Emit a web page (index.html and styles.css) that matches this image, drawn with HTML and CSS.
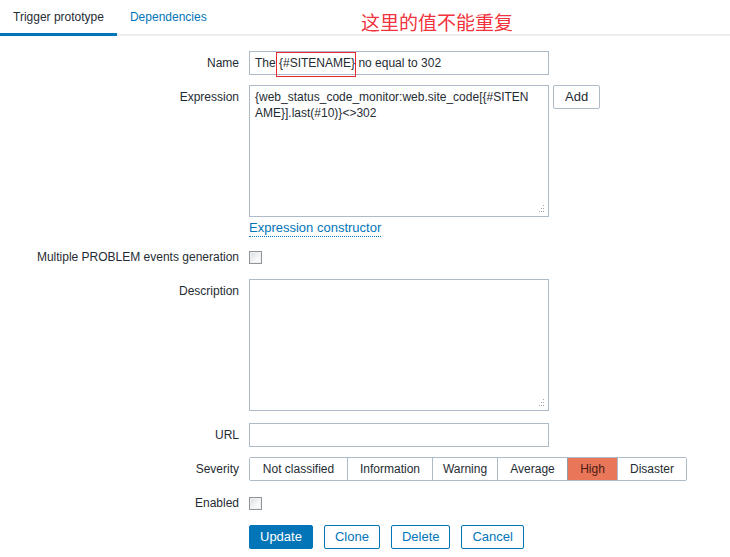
FILE: index.html
```html
<!DOCTYPE html>
<html>
<head>
<meta charset="utf-8">
<link rel="stylesheet" href="styles.css">
</head>
<body>
<div class="tabs">
  <div class="tab active">Trigger prototype</div>
  <div class="tab">Dependencies</div>
</div>
<div class="note">这里的值不能重复</div>
<div class="form">
  <div class="row">
    <div class="label">Name</div>
    <div class="field input">The <span class="hl">{#SITENAME}</span> no equal to 302</div>
  </div>
  <div class="row">
    <div class="label">Expression</div>
    <div class="col">
      <div class="expr-line">
        <div class="field area">{web_status_code_monitor:web.site_code[{#SITEN<br>AME}].last(#10)}&lt;&gt;302<svg class="grip" width="8" height="8" viewBox="0 0 8 8"><rect x="6" y="0" width="1" height="1"/><rect x="4" y="3" width="1" height="1"/><rect x="6" y="3" width="1" height="1"/><rect x="2" y="6" width="1" height="1"/><rect x="4" y="6" width="1" height="1"/><rect x="6" y="6" width="1" height="1"/></svg></div>
        <div class="btn-gray">Add</div>
      </div>
      <div class="link-line"><span class="link">Expression constructor</span></div>
    </div>
  </div>
  <div class="row row-check row-multi">
    <div class="label">Multiple PROBLEM events generation</div>
    <span class="checkbox"></span>
  </div>
  <div class="row row-desc">
    <div class="label">Description</div>
    <div class="field area"><svg class="grip" width="8" height="8" viewBox="0 0 8 8"><rect x="6" y="0" width="1" height="1"/><rect x="4" y="3" width="1" height="1"/><rect x="6" y="3" width="1" height="1"/><rect x="2" y="6" width="1" height="1"/><rect x="4" y="6" width="1" height="1"/><rect x="6" y="6" width="1" height="1"/></svg></div>
  </div>
  <div class="row row-url">
    <div class="label">URL</div>
    <div class="field input"></div>
  </div>
  <div class="row">
    <div class="label">Severity</div>
    <div class="seg">
      <span class="s1">Not classified</span><span class="s2">Information</span><span class="s3">Warning</span><span class="s4">Average</span><span class="s5 sel">High</span><span class="s6">Disaster</span>
    </div>
  </div>
  <div class="row row-check">
    <div class="label">Enabled</div>
    <span class="checkbox"></span>
  </div>
  <div class="row row-btns">
    <div class="label"></div>
    <div class="btns">
      <span class="btn primary">Update</span>
      <span class="btn">Clone</span>
      <span class="btn">Delete</span>
      <span class="btn">Cancel</span>
    </div>
  </div>
</div>
</body>
</html>
```

FILE: styles.css
```css
* { box-sizing: border-box; }
body {
  margin: 0;
  font-family: "Liberation Sans", Arial, sans-serif;
  font-size: 12px;
  color: #1f2c33;
  background: #fff;
  position: relative;
  width: 730px;
  height: 557px;
  overflow: hidden;
}
.tabs {
  display: flex;
  height: 36px;
  border-bottom: 2px solid #ebeef0;
}
.tab {
  padding: 10px 13px 0 13px;
  line-height: 14px;
  color: #0275b8;
  height: 34px;
}
.tab.active {
  color: #1f2c33;
  height: 36px;
  border-bottom: 3px solid #0275b8;
  margin-bottom: -2px;
}
.note {
  position: absolute;
  left: 361px;
  top: 11px;
  font-family: "Noto Sans CJK SC", sans-serif;
  font-size: 19px;
  line-height: 22px;
  color: #f2323c;
}
.form {
  padding-top: 15px;
}
.row {
  display: flex;
  align-items: flex-start;
  margin-top: 10px;
}
.row:first-child { margin-top: 0; }
.label {
  width: 249px;
  flex: none;
  text-align: right;
  padding-right: 10px;
  line-height: 14px;
  padding-top: 5px;
}
.col { display: flex; flex-direction: column; }
.expr-line { display: flex; align-items: flex-start; }
.field {
  width: 300px;
  border: 1px solid #acbbc7;
  background: #fff;
  padding: 4px 5px;
  line-height: 14px;
  position: relative;
}
.input { height: 24px; white-space: nowrap; }
.area { height: 132px; line-height: 16px; padding-top: 3px; }
.hl { position: relative; }
.hl::after {
  content: "";
  position: absolute;
  left: -3px;
  right: -1px;
  top: -4px;
  bottom: -7px;
  border: 1px solid #e8282c;
}
.grip {
  position: absolute;
  right: 3px;
  bottom: 3px;
  fill: #9aa5ad;
}
.btn-gray {
  margin-left: 4px;
  height: 24px;
  padding: 0 11px;
  line-height: 22px;
  border: 1px solid #acbbc7;
  border-radius: 2px;
  font-size: 13px;
  background: #fff;
}
.link-line { margin-top: 3px; line-height: 15px; }
.link {
  color: #0275b8;
  font-size: 13px;
  border-bottom: 1px dotted #0275b8;
  padding-bottom: 1px;
}
.row-check { margin-top: 10px; align-items: center; height: 24px; }
.row-multi { margin-top: 9px; }
.row-check .label { padding-top: 0; }
.checkbox {
  width: 13px;
  height: 13px;
  border: 1px solid #8f9598;
  background: linear-gradient(135deg, #d8dce0 0%, #f6f7f8 60%, #fff 100%);
  box-shadow: inset 0 0 0 1px #eef0f2;
}
.row-desc { margin-top: 10px; }
.row-url { margin-top: 12px; }
.seg {
  display: flex;
  border: 1px solid #acbbc7;
  border-radius: 2px;
  height: 24px;
}
.seg span {
  text-align: center;
  line-height: 22px;
  border-left: 1px solid #acbbc7;
  background: #fff;
}
.seg span:first-child { border-left: none; }
.seg .s1 { width: 97px; }
.seg .s2 { width: 85px; }
.seg .s3 { width: 65px; }
.seg .s4 { width: 70px; }
.seg .s5 { width: 50px; }
.seg .s6 { width: 69px; }
.seg .sel { background: #e97659; color: #4a1c12; border-color: #8f9ea9; }
.btns { display: flex; gap: 11px; }
.btn {
  height: 24px;
  padding: 0 10px;
  line-height: 22px;
  font-size: 13px;
  border: 1px solid #0275b8;
  border-radius: 2px;
  color: #0275b8;
  background: #fff;
}
.btn.primary { background: #0275b8; color: #fff; }
```
